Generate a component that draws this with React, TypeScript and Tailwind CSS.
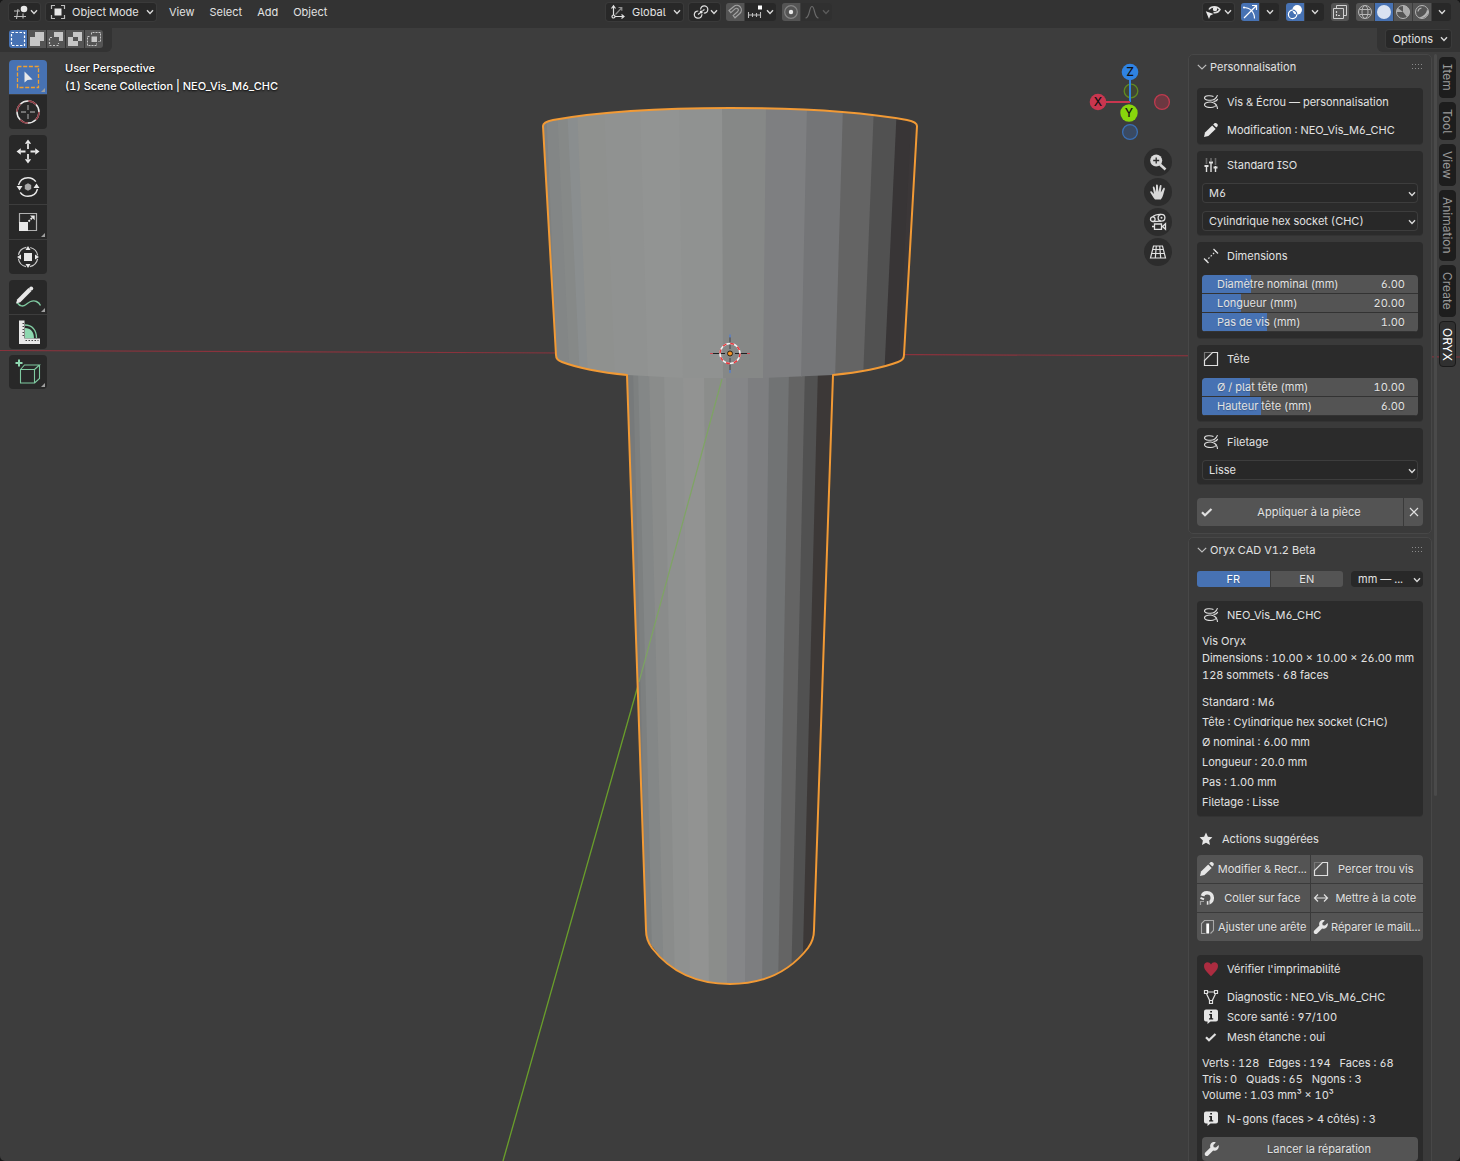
import React, { useState } from 'react';
import clsx from 'clsx';

type IconProps = { size?: number; className?: string; children?: React.ReactNode };

function Icon({ size = 16, className, children }: IconProps) {
  return (
    <svg
      width={size}
      height={size}
      viewBox={`0 0 ${size} ${size}`}
      fill="none"
      stroke="#e0e0e0"
      strokeWidth="1.2"
      aria-hidden="true"
      className={clsx('shrink-0', className)}
    >
      {children}
    </svg>
  );
}

function Chevron({ className }: { className?: string }) {
  return (
    <svg width="8" height="6" viewBox="0 0 8 6" fill="none" stroke="#d8d8d8" strokeWidth="1.4" aria-hidden="true" className={clsx('shrink-0', className)}>
      <path d="M1 1.2 4 4.4 7 1.2" />
    </svg>
  );
}

/* ---------- panel icons (16px) ---------- */

const ScrewIcon = () => (
  <Icon>
    <path d="M10.500 2.600C8 1.200 1.500 1.400 1.500 3.900S9 7 11.500 5.300C13 4.300 14 3 14.500 1.200" strokeWidth="1.100" />
    <path d="M10.500 8.700C8 7.500 1.500 8 1.500 10.800S9 14.200 11.500 12.600M10.500 7.500C13 7.300 14.200 6.500 14.700 4.800" strokeWidth="1.100" />
    <path d="M10.500 8.700C13 9.800 14.300 11.500 14.500 15M11.500 12.600C12.800 11.800 13.400 11.500 13.700 10.500" strokeWidth="1.100" />
  </Icon>
);

const PencilIcon = () => (
  <Icon>
    <path d="M1 15l1-4.400 7.200-7.200 3.500 3.500-7.300 7.200z" fill="#e6e6e6" stroke="none" />
    <path d="M10.200 2.500l1-1c.9-.8 2.200-.5 2.900.2.700.7 1 2 .2 2.900l-1 1z" fill="#e6e6e6" stroke="none" />
  </Icon>
);

const SlidersIcon = () => (
  <Icon>
    <path d="M3.500 1v6M8 1v3M12.500 1v7" stroke="#6a6a6a" strokeWidth="1.600" />
    <path d="M3.500 8v7M8 5v10M12.500 9v6" strokeWidth="1.400" />
    <path d="M1.500 9h4M6 5.500h4M10.500 10.500h4" strokeWidth="1.800" />
  </Icon>
);

const MeasureIcon = () => (
  <Icon>
    <path d="M3 13 13 3" strokeDasharray="1.600 1.700" />
    <path d="M1 10.500l4.500 4.500M10.500 1 15 5.500" strokeWidth="1.300" />
  </Icon>
);

const BevelIcon = () => (
  <Icon>
    <path d="M1.500 10V1.500H10" stroke="#777" />
    <path d="M1.500 14.500V9.500l8-8h5v13z" />
  </Icon>
);

const CheckIcon = () => (
  <Icon>
    <path d="M3 8.200l3 3 6.500-6.200" strokeWidth="2.200" />
  </Icon>
);

const StarIcon = () => (
  <Icon>
    <path d="M8 1.600l1.900 4.200 4.500.5-3.300 3.100.9 4.600L8 11.700 4 14l.9-4.600L1.600 6.300l4.500-.5z" fill="#e6e6e6" stroke="none" />
  </Icon>
);

const HeartIcon = () => (
  <Icon>
    <path d="M8 15.300C5.500 12.500 1 9 1 5c0-4.300 5.200-5 7-1.600C9.800 0 15 .7 15 5c0 4-4.500 7.500-7 10.300z" fill="#ac2c40" stroke="none" />
  </Icon>
);

const MeshIcon = () => (
  <Icon>
    <path d="M5 3h6M3.600 5l3.300 7M12.400 5 9.100 12" />
    <path d="M1.500 1.500h3v3h-3zM11.500 1.500h3v3h-3zM6.500 11.500h3v3h-3z" strokeWidth="1.200" />
  </Icon>
);

const InfoIcon = () => (
  <Icon>
    <path d="M3 .5h10a2 2 0 0 1 2 2v8a2 2 0 0 1-2 2H7.500L4.500 15v-2.500H3a2 2 0 0 1-2-2v-8a2 2 0 0 1 2-2z" fill="#e6e6e6" stroke="none" />
    <path d="M7.200 2h1.800v1.600H7.200zM6.200 5h2.800v4.200h1.200v1.200H6V9.200h1.200V6.200h-1z" fill="#222" stroke="none" />
  </Icon>
);

const SnapFaceIcon = () => (
  <Icon>
    <path d="M3.500 6.200C4 3.300 6 2.700 8 2.700c3.300 0 5.300 2.300 5.300 5.200 0 3-2.200 5.100-5.500 5.100" strokeWidth="3.600" stroke="#e6e6e6" />
    <path d="M1.500 5.800l4 1.700M9.800 10l.3 5.500" stroke="#545454" strokeWidth="1.100" />
    <path d="M1.500 15v-3.500H5" stroke="#a0a0a0" />
    <path d="M1.500 7.800 5 9.300" stroke="#e6e6e6" strokeWidth="2" />
  </Icon>
);

const ArrowsIcon = () => (
  <Icon>
    <path d="M2 8h12M5 4.500 1.500 8 5 11.500M11 4.500 14.500 8 11 11.500" />
  </Icon>
);

const EdgeIcon = () => (
  <Icon>
    <path d="M6.500 14.500h-4v-10l3-3h9v10l-3 3" stroke="#a8a8a8" strokeWidth="1.100" />
    <path d="M8.700 4.500v10" stroke="#fff" strokeWidth="2.800" />
  </Icon>
);

const WrenchIcon = () => (
  <Icon>
    <path
      d="M14.600 4.100 12 6.600 9.700 6.200 9.300 4l2.500-2.600c-2-.8-4-.2-5 1.300-.8 1.200-.8 2.600-.4 3.800L1.300 11.500c-.8.800-.8 2 0 2.900.8.800 2.100.8 2.900 0l5-5c1.400.5 2.900.3 4-.6 1.400-1.100 2-3 1.400-4.700z"
      fill="#e6e6e6"
      stroke="none"
    />
  </Icon>
);

/* ---------- 3D scene ---------- */

type Facet = [number, number, string];

const headFacets: Facet[] = [
  [538, 550, '#7e8181'],
  [546, 558, '#838686'],
  [557, 570, '#868988'],
  [567, 580, '#8a8e8f'],
  [577, 588, '#8f918f'],
  [604, 615, '#909291'],
  [640, 648, '#929493'],
  [679, 683, '#909291'],
  [722, 723, '#868887'],
  [766, 763, '#7e7f81'],
  [807, 801, '#747577'],
  [843, 835, '#646464'],
  [874, 863, '#515151'],
  [897, 884, '#383536'],
  [912, 898, '#3b3738'],
  [940, 925, '#3b3738'],
];

const shaftFacets: Facet[] = [
  [620, 638, '#777a7b'],
  [633, 648, '#7d8080'],
  [638, 653, '#848787'],
  [649, 664, '#8a8c8b'],
  [664, 675, '#8f9190'],
  [683, 690, '#929392'],
  [704, 709, '#8b8d8b'],
  [726, 727, '#858688'],
  [748, 745, '#7d7e80'],
  [769, 762, '#717374'],
  [789, 778, '#646464'],
  [805, 791, '#515151'],
  [818, 802, '#3c3837'],
  [850, 832, '#3c3837'],
];

const HEAD = 'M543 126Q543 122 553 120Q620 108 730 108Q840 108 907 120Q917 122 917 126L904 355Q904 360 898 362Q874 371 833 375L763 378H683L627 375Q586 371 562 362Q556 360 556 355Z';
const SHAFT = 'M627 370L646 930Q646 940 652 946Q678 984 730 984Q782 984 808 946Q814 940 814 930L833 370Z';
const OUTLINE =
  'M543 126Q543 122 553 120Q620 108 730 108Q840 108 907 120Q917 122 917 126L904 355Q904 360 898 362Q874 371 833 375L814 930Q814 940 808 948Q780 984 730 984Q680 984 652 948Q646 940 646 930L627 375Q586 371 562 362Q556 360 556 355Z';

function Facets({ facets, top, bottom }: { facets: Facet[]; top: number; bottom: number }) {
  return (
    <>
      {facets.slice(0, -1).map(([t, b, color], i) => {
        const [nt, nb] = facets[i + 1];
        return <path key={t} d={`M${t} ${top}H${nt + 1}L${nb + 1} ${bottom}H${b}Z`} fill={color} />;
      })}
    </>
  );
}

function Scene() {
  return (
    <svg viewBox="0 0 1460 1161" preserveAspectRatio="xMidYMid slice" className="absolute inset-0 h-full w-full" aria-hidden="true">
      <defs>
        <clipPath id="head"><path d={HEAD} /></clipPath>
        <clipPath id="shaft"><path d={SHAFT} /></clipPath>
      </defs>
      <path d="M0 350.500 1460 357" stroke="#8a333d" strokeWidth="1.200" />
      <path d="M639 682 503 1161" stroke="#6a9f2b" strokeWidth="1.300" />
      <g clipPath="url(#shaft)"><Facets facets={shaftFacets} top={368} bottom={990} /></g>
      <g clipPath="url(#head)"><Facets facets={headFacets} top={105} bottom={380} /></g>
      <path d="M722 379 690 496 639 682" stroke="#7ba85c" strokeWidth="1.200" fill="none" opacity=".85" />
      <path d={OUTLINE} fill="none" stroke="#f29a35" strokeWidth="2" strokeLinejoin="round" />
      <path d="M730 337v12M730 358v12" stroke="#5b5d60" strokeWidth="1.600" />
      <path d="M730 334.500v3M730 370v3" stroke="#5a7fc4" strokeWidth="1.600" />
      <path d="M712 353.500h13M735 353.500h13" stroke="#222" />
      <path d="M710 353.500h3M747 353.500h3" stroke="#cf4a55" />
      <circle cx="730" cy="353.500" r="10" fill="none" stroke="#f3f3f3" strokeWidth="1.500" />
      <circle cx="730" cy="353.500" r="10" fill="none" stroke="#e8363b" strokeWidth="1.500" strokeDasharray="3.900 3.954" />
      <circle cx="730" cy="353.500" r="2.500" fill="#f29222" stroke="#2b2115" />
    </svg>
  );
}

/* ---------- header ---------- */

const field = 'flex h-[18px] items-center rounded-[3px] bg-[#282828] ring-1 ring-[#3a3a3a]';

function Header() {
  return (
    <header className="grid h-7 grid-cols-[1fr_auto_1fr] bg-[#333333] pt-[3px] pl-[9px] pr-[9px]">
      <div className="flex h-[18px] items-center">
        <button aria-label="Editor type" className={clsx(field, 'w-[31px] justify-between pl-1 pr-[2px]')}>
          <Icon>
            <path d="M1 7h6M1 12.500h12M5 5 3.500 15M10 9.500v5" strokeWidth="1.100" stroke="#bdbdbd" />
            <circle cx="11" cy="5" r="3.300" fill="#e8e8e8" stroke="none" />
          </Icon>
          <Chevron />
        </button>
        <button className={clsx(field, 'ml-[6px] w-[110px] gap-[6px] pl-1 pr-[2px]')}>
          <Icon>
            <path d="M1.500 5V1.500H5M11 1.500h3.500V5M14.500 11v3.500H11M5 14.500H1.500V11" stroke="#bdbdbd" />
            <path d="M4.500 4.500h7v7h-7z" fill="#e8e8e8" stroke="none" />
          </Icon>
          <span>Object Mode</span>
          <Chevron className="ml-auto" />
        </button>
        <nav className="ml-[13px] flex gap-[15px]">
          <button>View</button>
          <button>Select</button>
          <button>Add</button>
          <button>Object</button>
        </nav>
      </div>

      <div className="flex h-[18px] items-center gap-[6px] pr-[22px]">
        <button className={clsx(field, 'w-[77px] gap-[6px] pl-1 pr-[2px]')}>
          <Icon>
            <path d="M3.500 2v10.500H14M1.500 4.500l2-2.800 2 2.800M11.500 10.500l2.500 2-2.500 2" />
            <circle cx="3.500" cy="12.500" r="1.500" fill="#282828" />
            <path d="M5.500 10.500 11.500 4M8.500 3.500h3.300v3.300" stroke="#8d8d8d" />
          </Icon>
          <span>Global</span>
          <Chevron className="ml-auto" />
        </button>
        <button aria-label="Pivot point" className={clsx(field, 'w-[31px] justify-between pl-1 pr-[2px]')}>
          <Icon>
            <path d="M7.500 5.500C8 3 9.500 1.800 11.200 1.800c2 0 3.600 1.600 3.600 3.500 0 2.300-1.800 3.800-4 3.800M9 10.200c-.3 2.600-2 4-4 4A3.600 3.600 0 0 1 1.300 10.700C1.300 8.500 3 7 5.300 7" />
            <circle cx="8.200" cy="8" r="1.500" fill="#e8e8e8" stroke="none" />
            <path d="M5 10.500 7 9M9.500 6.800 11.500 5.500" />
          </Icon>
          <Chevron />
        </button>
        <div className="flex h-[18px] gap-px overflow-hidden rounded-[3px] bg-[#3d3d3d]">
          <button aria-label="Snap" className="flex w-[18px] items-center justify-center bg-[#545454]">
            <Icon>
              <path d="M2 6.500 6.500 2.700c2.500-2 5.300-1.500 6.800.3 1.500 1.900 1.500 4.800-.8 6.800L8 13.800l-1.800-2.200 4.300-3.800c1-.9 1.200-2 .5-2.900-.8-.9-2-.9-3 0L3.800 8.700z" stroke="#a0a0a0" />
            </Icon>
          </button>
          <button aria-label="Snap to" className="flex w-[31px] items-center justify-between bg-[#282828] pl-[2px] pr-[2px]">
            <Icon>
              <path d="M1.500 8v6M5.500 9v4M9.500 9v4M13.500 8v6M1.500 11h12" stroke="#bdbdbd" strokeWidth="1.100" />
              <path d="M11 1.500h4v4h-4z" fill="#fff" stroke="none" />
            </Icon>
            <Chevron />
          </button>
        </div>
        <div className="flex h-[18px] gap-px overflow-hidden rounded-[3px] bg-[#3d3d3d]">
          <button aria-label="Proportional editing" className="flex w-[18px] items-center justify-center bg-[#545454]">
            <Icon>
              <circle cx="8" cy="8" r="6.300" stroke="#858585" />
              <circle cx="8" cy="8" r="2.200" fill="#e8e8e8" stroke="none" />
            </Icon>
          </button>
          <button aria-label="Falloff" disabled className="flex w-[31px] items-center justify-between bg-[#303030] pl-[3px] pr-[2px]">
            <Icon>
              <path d="M1.500 14C6 14 5 2.500 8 2.500S10 14 14.500 14" stroke="#6a6a6a" />
            </Icon>
            <Chevron className="opacity-25" />
          </button>
        </div>
      </div>

      <div className="flex h-[18px] items-center justify-end gap-[7px]">
        <button aria-label="Object visibility" className={clsx(field, 'w-[31px] justify-between pl-[2px] pr-[2px]')}>
          <Icon>
            <path d="M4 5.500C6 2 12 1.500 15 5.500c-1.500 2.500-4 3.500-6.500 3" strokeWidth="1.500" />
            <circle cx="10" cy="5" r="2.200" fill="#e8e8e8" stroke="none" />
            <path d="M.8 7.200 8.500 10 5.300 11.500 4 15z" fill="#e8e8e8" stroke="none" />
          </Icon>
          <Chevron />
        </button>
        <div className="flex h-[18px] gap-px overflow-hidden rounded-[3px] bg-[#3d3d3d]">
          <button aria-label="Gizmos" className="flex w-[18px] items-center justify-center bg-[#4772b3]">
            <Icon>
              <path d="M1.500 3.500C8 3.500 12.500 8 12.500 14.500M2 14 14 2M10 1.500h4.500V6" stroke="#fff" />
              <circle cx="2" cy="3.500" r="1" fill="#fff" stroke="none" />
            </Icon>
          </button>
          <button aria-label="Gizmo options" className="flex w-[19px] items-center justify-center bg-[#282828]"><Chevron /></button>
        </div>
        <div className="flex h-[18px] gap-px overflow-hidden rounded-[3px] bg-[#3d3d3d]">
          <button aria-label="Overlays" className="flex w-[18px] items-center justify-center bg-[#4772b3]">
            <Icon>
              <circle cx="10.200" cy="5.800" r="4.800" fill="#fff" stroke="none" />
              <circle cx="5.600" cy="10.400" r="4.200" stroke="#fff" />
              <path d="M5.600 6.200a4.200 4.200 0 0 1 4.200 4.200" stroke="#4772b3" />
            </Icon>
          </button>
          <button aria-label="Overlay options" className="flex w-[19px] items-center justify-center bg-[#282828]"><Chevron /></button>
        </div>
        <button aria-label="X-Ray" className="flex h-[18px] w-[18px] items-center justify-center rounded-[3px] bg-[#545454]">
          <Icon>
            <path d="M4.500 4.500V1.500h10v10h-3M1.500 4.500h10v10h-10z" stroke="#d0d0d0" strokeWidth="1" />
            <path d="M4.500 7v4.500H9" stroke="#d0d0d0" strokeDasharray="2 1" />
          </Icon>
        </button>
        <div className="flex h-[18px] gap-px overflow-hidden rounded-[3px] bg-[#3d3d3d]">
          <button aria-label="Wireframe" className="flex w-[18px] items-center justify-center bg-[#545454]">
            <Icon>
              <circle cx="8" cy="8" r="6.500" stroke="#b5b5b5" strokeWidth="1" />
              <ellipse cx="8" cy="8" rx="3" ry="6.500" stroke="#b5b5b5" strokeWidth="1" />
              <path d="M2.500 5.500h11M2.500 10.500h11" stroke="#b5b5b5" strokeWidth="1" />
            </Icon>
          </button>
          <button aria-label="Solid" className="flex w-[18px] items-center justify-center bg-[#4772b3]">
            <Icon><circle cx="8" cy="8" r="7" fill="#d9e2f1" stroke="none" /></Icon>
          </button>
          <button aria-label="Material preview" className="flex w-[18px] items-center justify-center bg-[#545454]">
            <Icon>
              <circle cx="8" cy="8" r="6.500" stroke="#b5b5b5" strokeWidth="1" />
              <path d="M8 1.500A6.500 6.500 0 0 1 14.500 8 6.500 6.500 0 0 1 12 13L8 8H1.500A6.500 6.500 0 0 1 3 4L8 8z" fill="#b5b5b5" stroke="none" opacity=".9" />
            </Icon>
          </button>
          <button aria-label="Rendered" className="flex w-[18px] items-center justify-center bg-[#545454]">
            <Icon>
              <circle cx="8" cy="8" r="6.500" stroke="#b5b5b5" strokeWidth="1" />
              <path d="M13 5C13 9 9.500 13 4.500 13.200 9 15.500 14.500 12 14.300 7.500z" fill="#b5b5b5" stroke="none" />
              <path d="M4 7.500C4.200 5.500 5.500 4.200 7.500 4" stroke="#b5b5b5" />
            </Icon>
          </button>
          <button aria-label="Shading options" className="flex w-[19px] items-center justify-center bg-[#282828]"><Chevron /></button>
        </div>
      </div>
    </header>
  );
}

function ToolSettings() {
  const [mode, setMode] = useState(0);
  const modes = [
    { name: 'Set', art: <path d="M2.500 2.500h13v13h-13z" stroke="#fff" strokeDasharray="2.500 1.500" /> },
    { name: 'Extend', art: <path d="M7 2h9v9h-4v5H2V7h5z" fill="#c6c6c6" stroke="none" /> },
    {
      name: 'Subtract',
      art: (
        <>
          <path d="M7 2h9v9h-4V7H7z" fill="#c6c6c6" stroke="none" />
          <path d="M5 7.500H2.500v8h9V13" stroke="#c6c6c6" strokeDasharray="2 1.500" />
        </>
      ),
    },
    { name: 'Difference', art: <path fillRule="evenodd" d="M7 2h9v9h-4v5H2V7h5zM7 7v4h5V7z" fill="#c6c6c6" stroke="none" /> },
    {
      name: 'Intersect',
      art: (
        <>
          <path d="M6.500 4.500v-2h9v9h-2M4.500 6.500h-2v9h9v-2" stroke="#c6c6c6" strokeWidth="1" strokeDasharray="2 1" />
          <path d="M6.500 6.500h5.500V12H6.500z" fill="#c6c6c6" stroke="none" />
        </>
      ),
    },
  ];
  return (
    <div className="flex h-6 items-start justify-between">
      <div className="h-6 rounded-br-md bg-[#333333] pt-[2px] pl-[9px] pr-[9px]">
        <div className="flex gap-px overflow-hidden rounded-[3px]">
          {modes.map((m, i) => (
            <button
              key={m.name}
              aria-label={m.name}
              onClick={() => setMode(i)}
              className={clsx('h-[18px] w-[18px]', mode === i ? 'bg-[#4772b3]' : 'bg-[#545454]')}
            >
              <Icon size={18}>{m.art}</Icon>
            </button>
          ))}
        </div>
      </div>
      <div className="h-6 rounded-bl-md bg-[#333333] pt-[2px] pl-[9px] pr-[9px]">
        <button className={clsx(field, 'gap-[7px] pl-[7px] pr-[3px]')}>
          Options
          <Chevron />
        </button>
      </div>
    </div>
  );
}

/* ---------- toolbar ---------- */

const tools = [
  [
    {
      name: 'Select Box',
      more: true,
      art: (
        <>
          <path d="M8.500 6.500h21v21h-21z" stroke="#f0a030" strokeWidth="1.300" strokeDasharray="4 1.700" />
          <path d="M15.500 11.500v11l3-2.500 5-.5z" fill="#e8e8e8" stroke="none" />
        </>
      ),
    },
    {
      name: 'Cursor',
      art: (
        <>
          <circle cx="19" cy="17" r="11" stroke="#e8e8e8" strokeWidth="1.500" />
          <circle cx="19" cy="17" r="11" stroke="#8c3a42" strokeWidth="1.500" strokeDasharray="8.639 8.639" />
          <path d="M19 10v5M19 19v5M12 17h5M21 17h5" stroke="#8a8a8a" strokeWidth="1.400" />
        </>
      ),
    },
  ],
  [
    {
      name: 'Move',
      art: (
        <>
          <path d="M19 9v5M19 19v5M11.500 16.500h5M21.500 16.500h5" stroke="#e8e8e8" strokeWidth="1.800" />
          <path d="M19 4.500l3.200 4.300h-6.400zM19 28.500l3.200-4.300h-6.400zM7.500 16.500l4.300-3.200v6.400zM30.500 16.500l-4.300-3.200v6.400z" fill="#e8e8e8" stroke="none" />
        </>
      ),
    },
    {
      name: 'Rotate',
      art: (
        <>
          <path d="M9.500 15c1.200-4.500 5-7.300 9.500-7.300 3.500 0 6 1.500 7.800 4M28.500 19c-1.200 4.500-5 7.300-9.500 7.300-3.500 0-6-1.500-7.800-4" strokeWidth="1.400" />
          <path d="M7.500 16h6l-3 4.500zM24.500 18h6l-3-4.500z" fill="#e8e8e8" stroke="none" />
          <path d="M19 13.300 22.200 15v4L19 20.700 15.800 19v-4z" fill="#a8a8a8" stroke="none" />
        </>
      ),
    },
    {
      name: 'Scale',
      more: true,
      art: (
        <>
          <path d="M10.500 18V8.500h17v17H19" stroke="#b0b0b0" />
          <path d="M10 17h9v9h-9z" fill="#e8e8e8" stroke="none" />
          <path d="M19.500 16.500l4-4" strokeWidth="1.800" strokeDasharray="2 1" />
          <path d="M21 10.500h4.700v4.700z" fill="#e8e8e8" stroke="none" />
        </>
      ),
    },
    {
      name: 'Transform',
      art: (
        <>
          <circle cx="19" cy="17" r="9.800" stroke="#c8c8c8" strokeDasharray="11.394 4" strokeDashoffset="-2" />
          <path d="M15 13h8v8h-8z" fill="#e8e8e8" stroke="none" />
          <path d="M19 6l2.500 4h-5zM19 28l2.500-4h-5zM8 17l4-2.500v5zM30 17l-4-2.500v5z" fill="#e8e8e8" stroke="none" />
        </>
      ),
    },
  ],
  [
    {
      name: 'Annotate',
      more: true,
      art: (
        <>
          <path d="M8 22.500c3 4 6 4.500 9 2 3.500-3 7.500-4.500 10.500-3 2 1 3.300 2.500 4 4" stroke="#7fc9a0" strokeWidth="1.400" />
          <path d="M7 23.500l1.300-4.300L19.500 8l3 3-11.200 11.200z" fill="#e8e8e8" stroke="none" />
          <circle cx="22.200" cy="8.500" r="2" fill="#e8e8e8" stroke="none" />
        </>
      ),
    },
    {
      name: 'Measure',
      art: (
        <>
          <path d="M16 10c7 0 11.500 5 11.500 13" stroke="#7fc9a0" strokeWidth="1.300" />
          <path d="M16 13c5.500 0 9 4 9 10.500h-9z" fill="#8ed8b0" stroke="none" />
          <path d="M10 5.500h5.500v18H31V29H10z" fill="#e8e8e8" stroke="none" />
          <path d="M13.500 8.500h2M13.500 11.500h2M13.500 14.500h2M13.500 17.500h2M13.500 20.500h2M16.500 25.500h13" stroke="#444" strokeDasharray="1.500 1.500" />
        </>
      ),
    },
  ],
  [
    {
      name: 'Add Cube',
      more: true,
      art: (
        <>
          <path d="M11.500 14.500h14v13.500h-14zM11.500 14.500l4-4.500h15l-5 4.500M30.500 10v13.500l-5 4.500" stroke="#7fc9a0" strokeWidth="1.100" />
          <path d="M10 4.500v7M6.500 8h7" stroke="#8ed8b0" strokeWidth="2" />
        </>
      ),
    },
  ],
];

function Toolbar() {
  const [active, setActive] = useState('Select Box');
  return (
    <div className="flex flex-col gap-[6px] pt-2 pl-[9px]">
      {tools.map((group, i) => (
        <div key={i} className="flex flex-col gap-px overflow-hidden rounded-[4px]">
          {group.map((tool) => (
            <button
              key={tool.name}
              aria-label={tool.name}
              onClick={() => setActive(tool.name)}
              className={clsx('h-[34px] w-[38px]', active === tool.name ? 'bg-[#4772b3]' : 'bg-[#282828]')}
            >
              <svg width="38" height="34" viewBox="0 0 38 34" fill="none" stroke="#e8e8e8" strokeWidth="1.200" aria-hidden="true">
                {tool.art}
                {tool.more && <path d="M36 28v4h-4z" fill="#a0a0a0" stroke="none" />}
              </svg>
            </button>
          ))}
        </div>
      ))}
    </div>
  );
}

/* ---------- navigation ---------- */

function Navigation() {
  const round = 'flex h-7 w-7 items-center justify-center rounded-full bg-[#2c2c2c]';
  return (
    <div className="mr-4 flex flex-col items-end pt-2">
      <svg width="84" height="84" viewBox="0 0 84 84" className="mb-1" aria-label="Orientation">
        <circle cx="43" cy="31" r="6.800" fill="#43502a" fillOpacity=".5" stroke="#5f8a20" strokeWidth="1.300" />
        <circle cx="74" cy="42" r="7.400" fill="#6c3841" stroke="#bf3a4e" strokeWidth="1.300" />
        <circle cx="42" cy="72" r="7.400" fill="#3a4a62" stroke="#3a6fb5" strokeWidth="1.300" />
        <path d="M42 42V12" stroke="#2f83e3" strokeWidth="2" />
        <path d="M42 42H10" stroke="#c9364f" strokeWidth="2" />
        <circle cx="42" cy="12" r="8.300" fill="#2f83e3" />
        <circle cx="10" cy="42" r="8.300" fill="#c9364f" />
        <circle cx="41" cy="53" r="8.700" fill="#88d60c" />
        <g fontFamily="Inter, sans-serif" fontSize="12" fontWeight="500" textAnchor="middle" fill="#111">
          <text x="42" y="16">Z</text>
          <text x="10" y="46">X</text>
          <text x="41" y="57">Y</text>
        </g>
      </svg>
      <div className="flex flex-col gap-[2px]">
        <button aria-label="Zoom" className={round}>
          <Icon size={18}>
            <circle cx="7.200" cy="7.500" r="6" fill="#d8d8d8" stroke="none" />
            <path d="M11 11.500l5.500 5" stroke="#d8d8d8" strokeWidth="2.600" />
            <path d="M7.200 4.500v6M4.200 7.500h6" stroke="#2c2c2c" strokeWidth="1.300" />
          </Icon>
        </button>
        <button aria-label="Pan" className={round}>
          <Icon size={18}>
            <path d="M6 16.500C4 14 2.500 11.500 1.300 9.500c-.4-1.200.9-1.500 1.600-.8L5 11 3.800 4.500c-.2-1.300 1.300-1.500 1.600-.4L7 9V2.500c0-1.300 1.800-1.300 1.900 0L9.300 9l1.500-6.300c.3-1.200 1.900-.9 1.700.3L11.800 9.500l2.500-4.200c.6-1 2-.3 1.500.9-1.200 3-1.500 7.500-4 10.300z" fill="#d8d8d8" stroke="none" />
          </Icon>
        </button>
        <button aria-label="Camera view" className={round}>
          <Icon size={18}>
            <circle cx="3.800" cy="6.200" r="2.300" strokeWidth="1.300" />
            <circle cx="12.500" cy="4.800" r="3.400" strokeWidth="1.300" />
            <path d="M3.500 3.900C6 1.500 9 1.300 12 1.400M4 8.600l8-.4" strokeWidth="1.200" />
            <circle cx="12.500" cy="4.800" r="1" fill="#e0e0e0" stroke="none" />
            <path d="M5.500 11h7v5.300h-7zM3 13.500h2.500M16.500 10.800v5.400L13.500 13.500z" strokeWidth="1.300" />
          </Icon>
        </button>
        <button aria-label="Perspective" className={round}>
          <Icon size={18}>
            <path d="M4.500 3h9l3 12h-15zM3.500 6.500h11M2.500 10.500h13M7.300 3 6.300 15M10.700 3l1 12" strokeWidth="1.200" />
          </Icon>
        </button>
      </div>
    </div>
  );
}

/* ---------- sidebar ---------- */

function Panel({ title, children }: { title: string; children: React.ReactNode }) {
  const [open, setOpen] = useState(true);
  return (
    <section className="rounded-[5px] border border-[#474747] bg-[#3a3a3a] px-2 pb-[7px]">
      <button onClick={() => setOpen(!open)} aria-expanded={open} className="mb-[10px] flex h-[23px] w-full items-center">
        <svg width="10" height="6" viewBox="0 0 10 6" fill="none" stroke="#bdbdbd" strokeWidth="1.200" aria-hidden="true">
          <path d="M.8.8 5 5 9.200.8" />
        </svg>
        <span className="ml-[3px] flex-1 text-left">{title}</span>
        <svg width="11" height="5" viewBox="0 0 11 5" stroke="#8a8a8a" strokeDasharray="1 2" aria-hidden="true">
          <path d="M0 .5h11M0 4.500h11" />
        </svg>
      </button>
      {open && children}
    </section>
  );
}

function Box({ icon, title, className, children }: { icon: React.ReactNode; title: string; className?: string; children?: React.ReactNode }) {
  return (
    <div className={clsx('rounded-[4px] bg-[#2b2b2b] px-[5px] shadow-[0_1px_0_#333]', className)}>
      <Row icon={icon} className="h-7">{title}</Row>
      {children}
    </div>
  );
}

function Row({ icon, className, children }: { icon: React.ReactNode; className?: string; children: React.ReactNode }) {
  return (
    <div className={clsx('flex items-center gap-2 pl-px whitespace-nowrap', className)}>
      {icon}
      <span>{children}</span>
    </div>
  );
}

function Dropdown({ label, options, className, height }: { label: string; options: string[]; className?: string; height: string }) {
  return (
    <div className={clsx('relative', className)}>
      <select aria-label={label} className={clsx('block w-full appearance-none rounded-[4px] bg-[#282828] pr-4 pl-[7px]', height)}>
        {options.map((o) => (
          <option key={o}>{o}</option>
        ))}
      </select>
      <Chevron className="pointer-events-none absolute top-1/2 right-[2px] -mt-[2px]" />
    </div>
  );
}

const boxed = 'h-5 leading-5 ring-1 ring-inset ring-[#3d3d3d]';

function NumberSlider({ label, start, max, digits = 2 }: { label: string; start: number; max: number; digits?: number }) {
  const [value, setValue] = useState(start);
  return (
    <label className="relative flex h-[19px] items-center justify-between border-b border-[#333333] bg-[#545454] pr-[13px] pl-[15px] whitespace-nowrap text-shadow-xs">
      <span className="absolute inset-y-0 left-0 bg-[#4772b3]" style={{ width: `${(value / max) * 100}%` }} />
      <span className="relative">{label}</span>
      <span className="relative">{value.toFixed(digits)}</span>
      <input
        type="range"
        min={0}
        max={max}
        step={0.01}
        value={value}
        onChange={(e) => setValue(Number(e.target.value))}
        className="absolute inset-0 h-full w-full cursor-ew-resize opacity-0"
      />
    </label>
  );
}

function ActionButton({ icon, children, className }: { icon: React.ReactNode; children: React.ReactNode; className?: string }) {
  return (
    <button className={clsx('flex min-w-0 items-center bg-[#545454] pl-[2px] whitespace-nowrap text-shadow-xs hover:bg-[#606060]', className)}>
      {icon}
      <span className="flex-1 text-center">{children}</span>
    </button>
  );
}

function CustomPanel() {
  return (
    <Panel title="Personnalisation">
      <div className="flex flex-col gap-[7px]">
        <Box icon={<ScrewIcon />} title="Vis & Écrou — personnalisation">
          <Row icon={<PencilIcon />} className="h-7">Modification : NEO_Vis_M6_CHC</Row>
        </Box>
        <Box icon={<SlidersIcon />} title="Standard ISO" className="pb-1">
          <div className="flex flex-col gap-2 pt-1">
            <Dropdown label="Taille" height={boxed} options={['M6', 'M3', 'M4', 'M5', 'M8']} />
            <Dropdown label="Type de tête" height={boxed} options={['Cylindrique hex socket (CHC)']} />
          </div>
        </Box>
        <Box icon={<MeasureIcon />} title="Dimensions" className="pb-[6px]">
          <div className="mt-[5px] overflow-hidden rounded-[4px]">
            <NumberSlider label="Diamètre nominal (mm)" start={6} max={26.5} />
            <NumberSlider label="Longueur (mm)" start={20} max={111} />
            <NumberSlider label="Pas de vis (mm)" start={1} max={3.33} />
          </div>
        </Box>
        <Box icon={<BevelIcon />} title="Tête" className="pb-[5px]">
          <div className="mt-[5px] overflow-hidden rounded-[4px]">
            <NumberSlider label="Ø / plat tête (mm)" start={10} max={45} />
            <NumberSlider label="Hauteur tête (mm)" start={6} max={22} />
          </div>
        </Box>
        <Box icon={<ScrewIcon />} title="Filetage" className="pb-1">
          <div className="pt-1">
            <Dropdown label="Filetage" height={boxed} options={['Lisse', 'Réel']} />
          </div>
        </Box>
      </div>
      <div className="mt-[14px] flex h-7 gap-px overflow-hidden rounded-[4px]">
        <ActionButton icon={<CheckIcon />} className="flex-1">Appliquer à la pièce</ActionButton>
        <button aria-label="Annuler" className="flex w-[19px] items-center justify-center bg-[#545454]">
          <svg width="10" height="10" viewBox="0 0 10 10" stroke="#e0e0e0" strokeWidth="1.200" aria-hidden="true">
            <path d="M1 1l8 8M9 1 1 9" />
          </svg>
        </button>
      </div>
    </Panel>
  );
}

function OryxPanel() {
  const [lang, setLang] = useState('FR');
  return (
    <Panel title="Oryx CAD V1.2 Beta">
      <div className="flex gap-2">
        <div className="flex h-4 flex-1 gap-px overflow-hidden rounded-[3px]">
          {['FR', 'EN'].map((l) => (
            <button key={l} onClick={() => setLang(l)} className={clsx('flex-1 text-shadow-xs', lang === l ? 'bg-[#4772b3] text-white' : 'bg-[#545454]')}>
              {l}
            </button>
          ))}
        </div>
        <Dropdown label="Unités" height="h-4 leading-4" className="w-[72px]" options={['mm — ...']} />
      </div>

      <Box icon={<ScrewIcon />} title="NEO_Vis_M6_CHC" className="mt-[14px] pb-1">
        <div className="pt-1 leading-[17px] whitespace-nowrap">
          <p>Vis Oryx</p>
          <p>Dimensions : 10.00 × 10.00 × 26.00 mm</p>
          <p>128 sommets · 68 faces</p>
        </div>
        <div className="mt-2 leading-5 whitespace-nowrap">
          <p>Standard : M6</p>
          <p>Tête : Cylindrique hex socket (CHC)</p>
          <p>Ø nominal : 6.00 mm</p>
          <p>Longueur : 20.0 mm</p>
          <p>Pas : 1.00 mm</p>
          <p>Filetage : Lisse</p>
        </div>
      </Box>

      <h3 className="mt-[9px] mb-[2px] flex h-7 items-center gap-2 pl-px">
        <StarIcon />
        Actions suggérées
      </h3>
      <div className="grid auto-rows-[28px] grid-cols-2 gap-px overflow-hidden rounded-[4px]">
        <ActionButton icon={<PencilIcon />}>Modifier &amp; Recr...</ActionButton>
        <ActionButton icon={<BevelIcon />}>Percer trou vis</ActionButton>
        <ActionButton icon={<SnapFaceIcon />}>Coller sur face</ActionButton>
        <ActionButton icon={<ArrowsIcon />}>Mettre à la cote</ActionButton>
        <ActionButton icon={<EdgeIcon />}>Ajuster une arête</ActionButton>
        <ActionButton icon={<WrenchIcon />}>Réparer le maill...</ActionButton>
      </div>

      <Box icon={<HeartIcon />} title="Vérifier l'imprimabilité" className="mt-[14px] pb-1">
        <div className="pt-1">
          <Row icon={<MeshIcon />} className="h-5">Diagnostic : NEO_Vis_M6_CHC</Row>
          <Row icon={<InfoIcon />} className="h-5">Score santé : 97/100</Row>
          <Row icon={<CheckIcon />} className="h-5">Mesh étanche : oui</Row>
        </div>
        <div className="mt-2 mb-[6px] leading-4 whitespace-pre">
          <p>{'Verts : 128   Edges : 194   Faces : 68'}</p>
          <p>{'Tris : 0   Quads : 65   Ngons : 3'}</p>
          <p>Volume : 1.03 mm³ × 10³</p>
        </div>
        <Row icon={<InfoIcon />} className="h-5">N-gons (faces &gt; 4 côtés) : 3</Row>
        <ActionButton icon={<WrenchIcon />} className="mt-2 h-6 w-full rounded-[4px]">Lancer la réparation</ActionButton>
      </Box>
    </Panel>
  );
}

function Tabs() {
  const [tab, setTab] = useState('ORYX');
  return (
    <div className="mr-1 flex w-[17px] flex-col gap-1 pt-[5px] text-[12px]">
      {['Item', 'Tool', 'View', 'Animation', 'Create', 'ORYX'].map((t) => (
        <button
          key={t}
          onClick={() => setTab(t)}
          className={clsx(
            'flex w-full items-center justify-center rounded-[4px] border pt-[6px] pb-[6px] leading-[15px] [writing-mode:vertical-rl]',
            tab === t ? 'border-[#1a1a1a] bg-[#303030] text-white' : 'border-[#1d1d1d] bg-[#1d1d1d] text-[#999999]'
          )}
        >
          {t}
        </button>
      ))}
    </div>
  );
}

export default function App() {
  return (
    <div className="h-screen bg-[#181818] font-['Inter',sans-serif] text-[11px] leading-[14px] text-[#e2e2e2] [font-feature-settings:'tnum','cv03','cv04','cv05','cv08']">
      <div className="relative h-full overflow-hidden rounded-[5px] bg-[#3d3d3d]">
        <Scene />
        <div className="relative flex h-full flex-col">
          <Header />
          <ToolSettings />
          <main className="flex min-h-0 flex-1">
            <Toolbar />
            <div className="ml-[18px] flex-1 pt-[7px] leading-[18px] font-medium text-white text-shadow-[0_1px_2px_rgb(0_0_0/0.9)]">
              <p>User Perspective</p>
              <p>(1) Scene Collection | NEO_Vis_M6_CHC</p>
            </div>
            <Navigation />
            <aside className="flex w-[244px] flex-col gap-[3px] overflow-hidden pt-[2px]">
              <CustomPanel />
              <OryxPanel />
            </aside>
            <div className="mx-[2px] mt-[2px] h-[742px] w-[3px] rounded-full bg-[#4a4a4a]" />
            <Tabs />
          </main>
        </div>
      </div>
    </div>
  );
}
